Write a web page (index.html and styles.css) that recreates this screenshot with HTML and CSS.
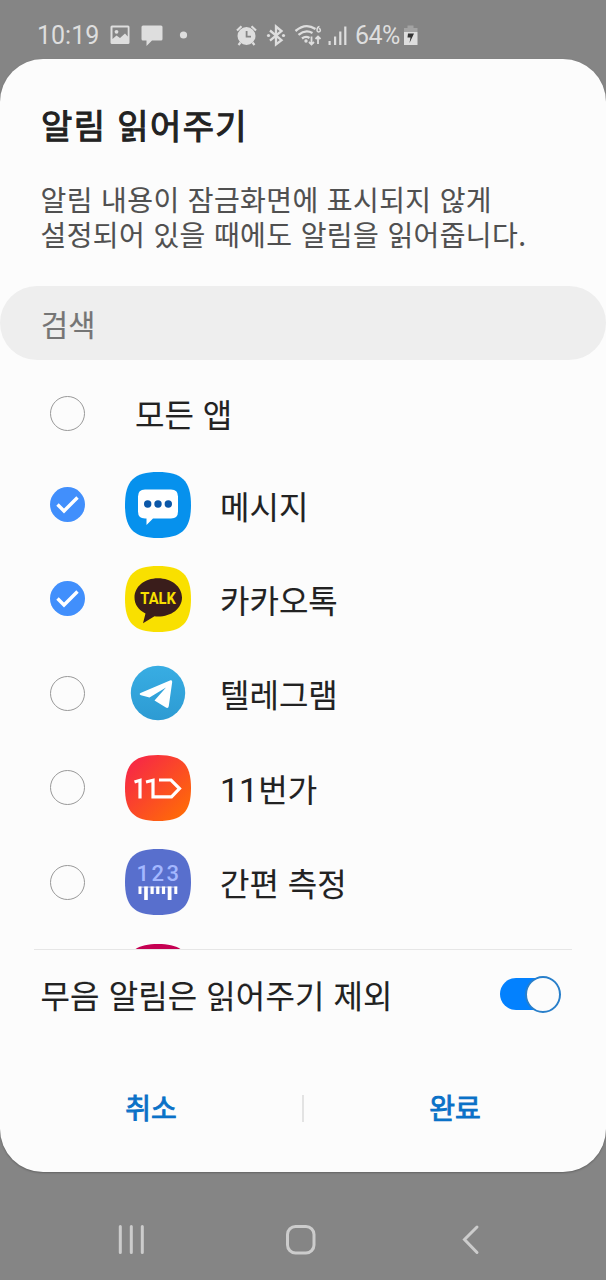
FILE: index.html
```html
<!DOCTYPE html>
<html lang="ko">
<head>
<meta charset="utf-8">
<title>알림 읽어주기</title>
<link rel="stylesheet" href="styles.css">
</head>
<body>
<div class="screen">
  <header class="status">
    <span class="clock">10:19</span>
    <svg class="status-left" width="90" height="24" viewBox="0 0 90 24">
      <path fill-rule="evenodd" d="M2 1.500H18a1.500 1.500 0 0 1 1.500 1.500V18.500a1.500 1.500 0 0 1-1.500 1.500H2a1.500 1.500 0 0 1-1.500-1.500V3a1.500 1.500 0 0 1 1.500-1.500ZM2.500 3.500V15L6.500 11.500L10 14L15 9.500L17.700 12.500V3.500Z"/>
      <circle cx="6.500" cy="7.800" r="1.900"/>
      <path d="M33 1.500H51a1.500 1.500 0 0 1 1.500 1.500V15a1.500 1.500 0 0 1-1.500 1.500H42L36.500 22V16.500H33a1.500 1.500 0 0 1-1.500-1.500V3a1.500 1.500 0 0 1 1.500-1.500Z"/>
      <circle cx="73.500" cy="11" r="3.600"/>
    </svg>
    <svg class="status-right" width="112" height="24" viewBox="0 0 112 24">
      <path fill-rule="evenodd" d="M10.500 3a9 9 0 1 1 0 18a9 9 0 0 1 0-18ZM9.700 7V13.500H15V11.800H11.500V7Z"/>
      <path class="line" d="M1 6.500L5.500 2.200M20 6.500L15.500 2.200M4.500 18.500L2.500 21M16.500 18.500L18.500 21" stroke-width="2.200"/>
      <path class="line" d="M34 6.500L45.500 16.200L40 20.500V2.500L45.500 7L34 16.700" stroke-width="2.300"/>
      <circle cx="32.500" cy="11.500" r="1.600"/><circle cx="47.500" cy="11.500" r="1.600"/>
      <path class="line" d="M59.500 7Q69.500-1.500 79.500 5M62.500 10.800Q69.500 5 76.500 9M66 14.500Q69.800 11.500 73.500 14" stroke-width="2.300"/>
      <circle cx="70" cy="17" r="1.700"/>
      <path class="line" d="M75.500 12.500V20M73 18L75.500 20.500L78 18M82 20V13M79.500 15L82 12.500L84.500 15" stroke-width="1.800"/>
      <path class="line" d="M83.500 2.500Q81 3 81 6.200a1.700 1.700 0 1 0 1.800-1.700" stroke-width="1.500"/>
      <path d="M92.500 17h2.200v4h-2.200ZM98 12.500h2.200V21H98ZM103.200 7.500h2.200V21h-2.200ZM108.200 2.500h2.200V21h-2.200Z"/>
    </svg>
    <span class="percent">64%</span>
    <svg class="battery" width="16" height="24" viewBox="0 0 16 24">
      <path opacity=".35" d="M1 4H4.500V1.500H10.500V4H14.500V8H1Z"/>
      <path d="M1 8H14.500V21H1Z"/>
      <path fill="#333" d="M5 9.500H11L6.500 19L7.500 13.500H4.500Z"/>
    </svg>
  </header>

  <main class="dialog">
    <h1 class="title">알림 읽어주기</h1>
    <p class="desc">알림 내용이 잠금화면에 표시되지 않게<br>설정되어 있을 때에도 알림을 읽어줍니다.</p>
    <div class="search">검색</div>

    <ul class="list">
      <li class="row row-all"><span class="radio"></span><span class="label">모든 앱</span></li>
      <li class="row">
        <svg class="check" viewBox="0 0 35 35"><circle cx="17.500" cy="17.500" r="17.500"/><path d="M7.500 17.500L14 24L27.500 10.500"/></svg>
        <svg class="app" viewBox="0 0 66 66">
          <path fill="#0691ed" d="M33 0C57 0 66 9 66 33S57 66 33 66S0 57 0 33S9 0 33 0Z"/>
          <path fill="#fff" d="M20 17.500H46Q53 17.500 53 24.500V39.500Q53 46.500 46 46.500H28L21.500 53V46.500H20Q13 46.500 13 39.500V24.500Q13 17.500 20 17.500Z"/>
          <g fill="#0b57a8"><circle cx="22.700" cy="32" r="3.700"/><circle cx="33" cy="32" r="3.700"/><circle cx="43.300" cy="32" r="3.700"/></g>
        </svg>
        <span class="label">메시지</span>
      </li>
      <li class="row">
        <svg class="check" viewBox="0 0 35 35"><circle cx="17.500" cy="17.500" r="17.500"/><path d="M7.500 17.500L14 24L27.500 10.500"/></svg>
        <svg class="app" viewBox="0 0 66 66">
          <path fill="#f9e000" d="M33 0C57 0 66 9 66 33S57 66 33 66S0 57 0 33S9 0 33 0Z"/>
          <path fill="#3a1d1b" d="M33 12.200C46.500 12.200 57 20.500 57 31.500S46.500 50.500 33 50.500Q31 50.500 29.500 50.300L18 57.200L20.500 47.500C13.500 44 9.500 38.500 9.500 31.500C9.500 20.500 19.500 12.200 33 12.200Z"/>
          <text class="talk" x="15.300" y="37.500" textLength="35.500" lengthAdjust="spacingAndGlyphs">TALK</text>
        </svg>
        <span class="label">카카오톡</span>
      </li>
      <li class="row">
        <span class="radio"></span>
        <svg class="app" viewBox="0 0 66 66">
          <defs><linearGradient id="sky" x2="0" y2="1"><stop stop-color="#38ade3"/><stop offset="1" stop-color="#2d9bd3"/></linearGradient></defs>
          <circle cx="33" cy="33" r="27.200" fill="url(#sky)"/>
          <path fill="#fff" d="M15.500 33L45.500 20.300Q47.300 19.800 47.200 22L43.800 46Q43.300 49 40.500 47.300L29.500 40.500L41 27.500L24.500 37.500L16 35.300Q13.700 34.200 15.500 33Z"/>
        </svg>
        <span class="label">텔레그램</span>
      </li>
      <li class="row">
        <span class="radio"></span>
        <svg class="app" viewBox="0 0 66 66">
          <defs><linearGradient id="sunset" x2="1" y2="1"><stop offset=".15" stop-color="#f72c42"/><stop offset=".9" stop-color="#ff6a08"/></linearGradient></defs>
          <path fill="url(#sunset)" d="M33 0C57 0 66 9 66 33S57 66 33 66S0 57 0 33S9 0 33 0Z"/>
          <path fill="none" stroke="#fff" stroke-width="3.200" d="M9.500 27L15 25.300V43.500M21 27L28 25.300V41.800H46.500L54.500 33.500L46 25H34"/>
        </svg>
        <span class="label"><span class="digits">11</span>번가</span>
      </li>
      <li class="row">
        <span class="radio"></span>
        <svg class="app" viewBox="0 0 66 66">
          <path fill="#586fcd" d="M33 0C57 0 66 9 66 33S57 66 33 66S0 57 0 33S9 0 33 0Z"/>
          <text class="nums" x="11.500" y="32" textLength="42.500">123</text>
          <path fill="#fff" d="M13.500 37.500h3v7.500h-3ZM19.200 37.500h3.600v13.500h-3.600ZM25.500 37.500h3.200v7.500h-3.200ZM31.200 37.500h3.200v7.500h-3.200ZM36.900 37.500h3.200v7.500h-3.200ZM42.700 37.500h3.800v13.500h-3.800ZM49.300 37.500h3v7.500h-3Z"/>
          <path stroke="#fff" stroke-opacity=".5" stroke-width="1.200" d="M13.500 38.100H52.300"/>
        </svg>
        <span class="label">간편 측정</span>
      </li>
      <li class="row">
        <span class="radio"></span>
        <svg class="app" viewBox="0 0 66 66"><path fill="#c50052" d="M33 0C57 0 66 9 66 33S57 66 33 66S0 57 0 33S9 0 33 0Z"/></svg>
      </li>
    </ul>

    <div class="silent">
      <span class="silent-label">무음 알림은 읽어주기 제외</span>
      <span class="switch"><span class="knob"></span></span>
    </div>
    <div class="actions">
      <span class="action">취소</span>
      <span class="separator"></span>
      <span class="action">완료</span>
    </div>
  </main>

  <nav class="nav">
    <svg width="606" height="60" viewBox="0 0 606 60">
      <path d="M120.300 15.500V41.500M131.300 15.500V41.500M142.300 15.500V41.500" stroke-width="3"/>
      <rect x="287.500" y="15.500" width="26.500" height="26.500" rx="8" stroke-width="3"/>
      <path d="M477 16L464.500 28.500L477 41.500" stroke-width="3"/>
    </svg>
  </nav>
</div>
</body>
</html>
```
FILE: styles.css
```css
* { box-sizing: border-box; }
body { margin: 0; background: #858585; }
.screen {
  width: 606px;
  height: 1280px;
  overflow: hidden;
  display: flex;
  flex-direction: column;
  background: #858585;
  color: #222;
  font-family: "Noto Sans CJK KR", sans-serif;
}

.status {
  height: 59px;
  flex: none;
  display: flex;
  align-items: center;
  padding: 12px 0 0 37px;
  color: #dedede;
  font: 400 25px/24px Roboto, sans-serif;
}
.status svg { flex: none; fill: #dedede; }
.status .line { fill: none; stroke: #dedede; }
.clock { width: 73px; }
.status-left { margin-right: 36px; }
.percent { width: 48px; margin-left: 7px; letter-spacing: -.6px; }

.dialog {
  height: 1113px;
  flex: none;
  display: flex;
  flex-direction: column;
  border-radius: 43px;
  background: #fcfcfc;
  box-shadow: 0 1px 2px #0004;
}
.title {
  margin: 40px 0 0 41px;
  font-size: 34px;
  line-height: 52px;
  font-weight: 400;
  letter-spacing: 1.4px;
  -webkit-text-stroke: 1.1px #222;
}
.desc {
  margin: 31px 0 0 40.5px;
  color: #505050;
  font-size: 28px;
  line-height: 35px;
  letter-spacing: .4px;
  white-space: nowrap;
  -webkit-text-stroke: .1px #505050;
}
.search {
  height: 74px;
  margin-top: 34px;
  padding-left: 41px;
  border-radius: 37px;
  background: #eee;
  color: #757575;
  font-size: 29.5px;
  line-height: 74px;
  -webkit-text-stroke: .2px #757575;
}

.list {
  height: 590px;
  margin: 0 34px;
  padding: 9px 0 0;
  overflow: hidden;
  border-bottom: 1px solid #e6e6e6;
  list-style: none;
}
.row {
  height: 94.4px;
  display: flex;
  align-items: center;
  padding-left: 16px;
  font-size: 32px;
}
.row-all { height: 88.4px; }
.radio, .check { width: 35px; height: 35px; flex: none; }
.radio { border: 1.5px solid #999; border-radius: 50%; }
.check circle { fill: #418ffc; }
.check path { fill: none; stroke: #fff; stroke-width: 3.4; }
.app { width: 66px; height: 66px; flex: none; margin: 0 29px 0 40px; }
.row-all .label { margin-left: 50px; }
.label { line-height: 46px; white-space: nowrap; -webkit-text-stroke: .12px #222; }
.digits { font-family: Roboto, sans-serif; font-weight: 400; font-size: 34px; line-height: 40px; letter-spacing: 0; }
.talk { font: 700 16.3px Roboto, sans-serif; fill: #f9e000; }
.nums { font: 500 22px Roboto, sans-serif; fill: #a3b7ff; }

.silent {
  height: 88px;
  display: flex;
  align-items: center;
  justify-content: space-between;
  padding: 0 45px 0 40.5px;
  font-size: 32px;
}
.silent-label { line-height: 46px; white-space: nowrap; letter-spacing: .1px; -webkit-text-stroke: .12px #222; }
.switch {
  width: 61px;
  height: 32px;
  display: flex;
  align-items: center;
  justify-content: flex-end;
  border-radius: 16px;
  background: linear-gradient(90deg, #0381fe 45px, transparent 45px);
}
.knob {
  width: 36px;
  height: 37px;
  flex: none;
  border: 2px solid #297fca;
  border-radius: 50%;
  background: #fcfcfc;
}
.actions {
  height: 52px;
  margin-top: 44px;
  display: flex;
  align-items: center;
  color: #0a71c7;
  font-size: 28px;
}
.action {
  flex: 1;
  padding-bottom: 2px;
  text-align: center;
  line-height: 40px;
  -webkit-text-stroke: .9px #0a71c7;
}
.separator { width: 2px; height: 27px; background: #e3e3e3; }

.nav { padding-top: 39px; }
.nav svg { display: block; fill: none; stroke: #ccc; stroke-linecap: round; }
```
